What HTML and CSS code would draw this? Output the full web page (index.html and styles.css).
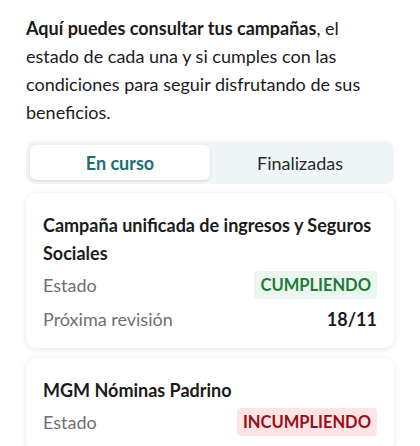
FILE: index.html
```html
<!DOCTYPE html>
<html lang="es">
<head>
    <meta charset="UTF-8">
    <meta name="viewport" content="width=device-width, initial-scale=1.0">
    <title>Campañas</title>
    <link rel="stylesheet" href="styles.css">
</head>
<body>
    <div class="container">
        <p class="intro"><strong>Aquí puedes consultar tus campañas</strong>, el estado de cada una y si cumples con las condiciones para seguir disfrutando de sus beneficios.</p>

        <div class="tabs">
            <button class="tab active">En curso</button>
            <button class="tab">Finalizadas</button>
        </div>

        <div class="card">
            <h2 class="card-title">Campaña unificada de ingresos y Seguros Sociales</h2>
            <div class="row">
                <span class="label">Estado</span>
                <span class="badge ok">CUMPLIENDO</span>
            </div>
            <div class="row row-date">
                <span class="label">Próxima revisión</span>
                <span class="value">18/11</span>
            </div>
        </div>

        <div class="card">
            <h2 class="card-title">MGM Nóminas Padrino</h2>
            <div class="row">
                <span class="label">Estado</span>
                <span class="badge ko">INCUMPLIENDO</span>
            </div>
        </div>
    </div>
</body>
</html>
```

FILE: styles.css
```css
* {
    margin: 0;
    padding: 0;
    box-sizing: border-box;
}

body {
    font-family: Lato, sans-serif;
    background: #fff;
    color: #1b1b1b;
}

.container {
    padding: 14px 26px 0 26px;
}

.intro {
    font-size: 18px;
    line-height: 28px;
}

.intro strong {
    font-weight: 700;
}

.tabs {
    display: flex;
    margin-top: 15px;
    padding: 4px;
    background: #f0f5f8;
    border-radius: 9px;
}

.tab {
    flex: 1;
    height: 35px;
    border: none;
    background: transparent;
    font-family: inherit;
    font-size: 18px;
    color: #2a2a2a;
    border-radius: 6px;
}

.tab.active {
    background: #fff;
    color: #1f6e72;
    font-weight: 700;
    box-shadow: 0 1px 3px rgba(0, 0, 0, 0.12);
}

.card {
    margin-top: 9px;
    padding: 18px 17px 15px 17px;
    background: #fff;
    border-radius: 10px;
    box-shadow: 0 1px 6px rgba(0, 0, 0, 0.1);
}

.card + .card {
    margin-top: 10px;
}

.card-title {
    font-size: 18px;
    font-weight: 700;
    line-height: 28px;
}

.row {
    display: flex;
    justify-content: space-between;
    align-items: center;
    margin-top: 4px;
    font-size: 18px;
    line-height: 28px;
}

.row-date {
    margin-top: 6px;
}

.label {
    color: #6f6f6f;
}

.value {
    font-weight: 700;
}

.badge {
    padding: 0 6px;
    border-radius: 4px;
    font-weight: 700;
    font-size: 16.5px;
}

.ok {
    background: #eaf6ee;
    color: #1c7a3b;
}

.ko {
    background: #fde4e5;
    color: #9a0d16;
}
```
